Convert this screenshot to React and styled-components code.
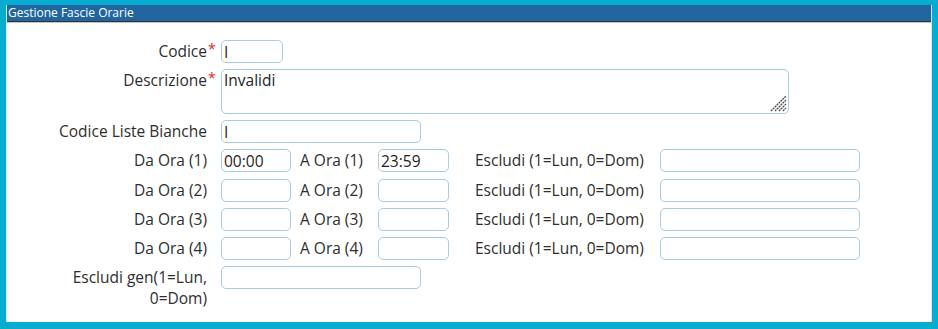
import React from "react";
import styled, { createGlobalStyle } from "styled-components";

const GlobalStyle = createGlobalStyle`
  html, body {
    margin: 0;
    padding: 0;
    background: #ffffff;
  }
  * {
    box-sizing: border-box;
  }
`;

const Frame = styled.div`
  width: 938px;
  height: 329px;
  background: #07acd0;
  padding: 5px 6px 7px 6px;
`;

const Panel = styled.div`
  height: 100%;
  background: #ffffff;
  border-left: 1px solid #c9eef6;
  border-right: 1px solid #c9eef6;
  display: flex;
  flex-direction: column;
`;

const Header = styled.div`
  height: 17px;
  background: #2166a0;
  color: #ffffff;
  font-family: "Open Sans", "Noto Sans", sans-serif;
  font-size: 12px;
  line-height: 16px;
  padding-left: 1px;
  border-bottom: 1px solid #333333;
  box-shadow: 0 1px 0 #c4c4c4;
`;

const Body = styled.div`
  padding-top: 18px;
  display: flex;
  flex-direction: column;
  gap: 6px;
  font-family: "Open Sans", "Noto Sans", sans-serif;
  font-size: 15.5px;
  color: #2e2e2e;
`;

const Row = styled.div`
  display: flex;
  align-items: flex-start;
  margin-top: ${(p) => (p.$extra ? "1px" : "0")};
`;

const Label = styled.div`
  width: 200px;
  text-align: right;
  line-height: ${(p) => (p.$multi ? "21px" : "23px")};
  padding-top: ${(p) => (p.$multi ? "1px" : "0")};
  white-space: nowrap;
`;

const Req = styled.span`
  width: 14px;
  flex: none;
  color: #e8271f;
  font-size: 14px;
  line-height: 17px;
  padding-left: 1px;
`;

const SideLabel = styled.div`
  width: ${(p) => p.$w}px;
  margin-left: ${(p) => p.$ml}px;
  line-height: 23px;
  white-space: nowrap;
`;

const Input = styled.input`
  width: ${(p) => p.$w}px;
  height: 23px;
  border: 1px solid #a9cbe3;
  border-radius: 5px;
  padding: 0 2px;
  font-family: "Open Sans", "Noto Sans", sans-serif;
  font-size: 15.5px;
  color: #1e1e1e;
  background: #ffffff;
  outline: none;
`;

const AreaWrap = styled.div`
  position: relative;
  width: 568px;
  height: 45px;
`;

const Area = styled.textarea`
  display: block;
  width: 100%;
  height: 100%;
  border: 1px solid #a9cbe3;
  border-radius: 5px;
  padding: 0 2px;
  margin: 0;
  font-family: "Open Sans", "Noto Sans", sans-serif;
  font-size: 15.5px;
  line-height: 21px;
  color: #1e1e1e;
  resize: none;
  outline: none;
`;

const Grip = styled.svg`
  position: absolute;
  right: 2px;
  bottom: 2px;
  pointer-events: none;
`;

const slots = [
  { n: 1, da: "00:00", a: "23:59" },
  { n: 2, da: "", a: "" },
  { n: 3, da: "", a: "" },
  { n: 4, da: "", a: "" },
];

const TimeRow = ({ n, da, a }) => (
  <Row $extra={n === 2}>
    <Label>Da Ora ({n})</Label>
    <Req />
    <Input $w={70} defaultValue={da} />
    <SideLabel $w={78} $ml={9}>
      A Ora ({n})
    </SideLabel>
    <Input $w={71} defaultValue={a} />
    <SideLabel $w={185} $ml={26}>
      Escludi (1=Lun, 0=Dom)
    </SideLabel>
    <Input $w={200} />
  </Row>
);

export default function App() {
  return (
    <>
      <GlobalStyle />
      <Frame>
        <Panel>
          <Header>Gestione Fascie Orarie</Header>
          <Body>
            <Row>
              <Label>Codice</Label>
              <Req>*</Req>
              <Input $w={62} defaultValue="I" />
            </Row>
            <Row>
              <Label>Descrizione</Label>
              <Req>*</Req>
              <AreaWrap>
                <Area defaultValue="Invalidi" />
                <Grip width="17" height="17" viewBox="0 0 17 17">
                  <g stroke="#555555" strokeWidth="1.4" strokeDasharray="2 0.7">
                    <line x1="1" y1="16" x2="16" y2="1" />
                    <line x1="5" y1="16" x2="16" y2="5" />
                    <line x1="9" y1="16" x2="16" y2="9" />
                    <line x1="13" y1="16" x2="16" y2="13" />
                  </g>
                </Grip>
              </AreaWrap>
            </Row>
            <Row>
              <Label>Codice Liste Bianche</Label>
              <Req />
              <Input $w={200} defaultValue="I" />
            </Row>
            {slots.map((s) => (
              <TimeRow key={s.n} {...s} />
            ))}
            <Row>
              <Label $multi>
                Escludi gen(1=Lun,
                <br />
                0=Dom)
              </Label>
              <Req />
              <Input $w={200} />
            </Row>
          </Body>
        </Panel>
      </Frame>
    </>
  );
}
